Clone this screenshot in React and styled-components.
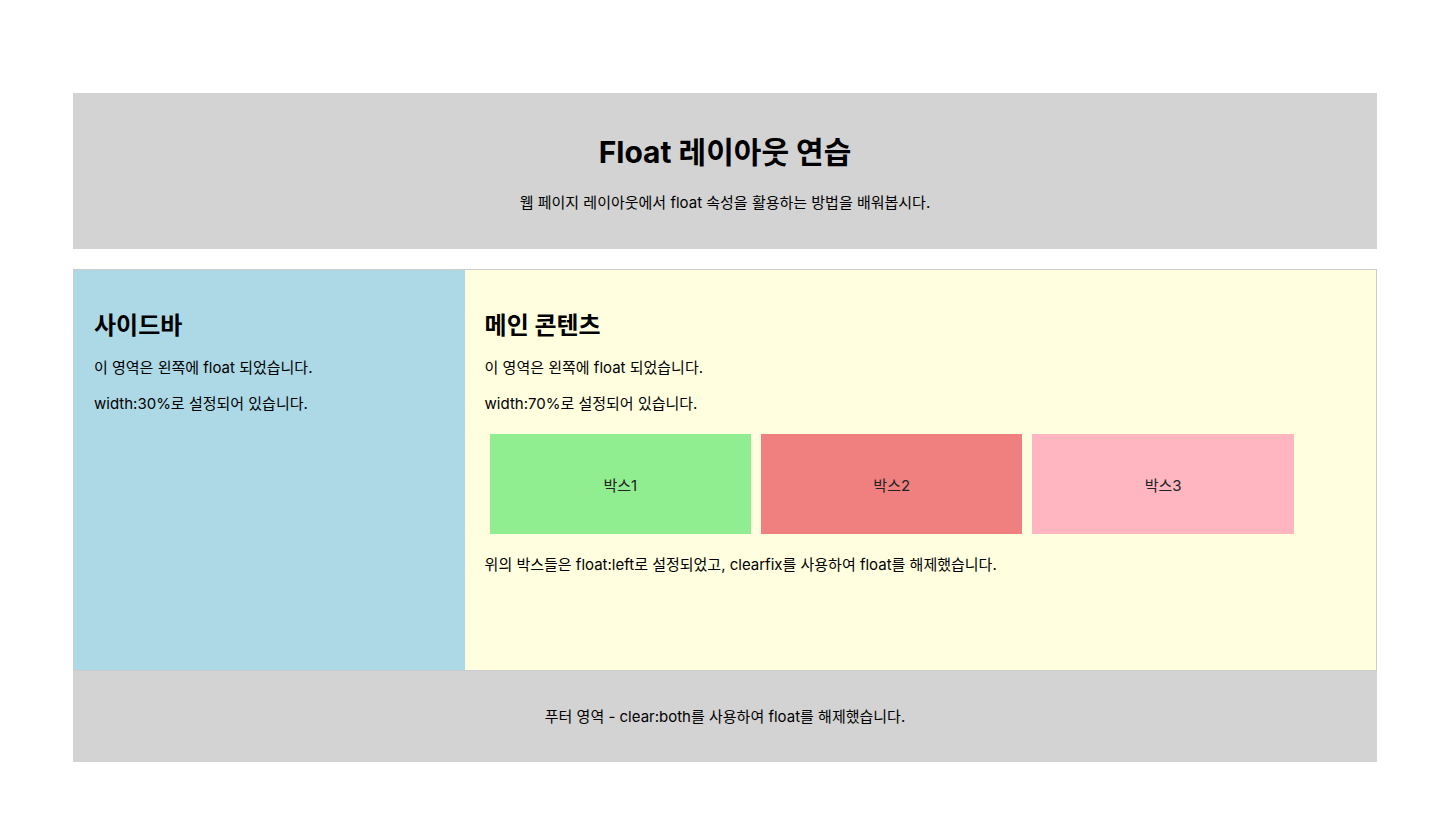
import React from 'react';
import styled, { createGlobalStyle } from 'styled-components';

const GlobalStyle = createGlobalStyle`
  body {
    margin: 0;
    background: #fff;
    font-family: "Inter", "Noto Sans CJK KR", sans-serif;
    color: #000;
  }
`;

const Page = styled.div`
  width: 1304px;
  margin: 93px 0 0 73px;
`;

const Header = styled.header`
  background: #d3d3d3;
  padding: 20px;
  text-align: center;
  margin-bottom: 20px;
  h1 {
    font-size: 30px;
    font-weight: 700;
    margin: 20px 0 21px;
    line-height: 38px;
  }
  p {
    font-size: 15px;
    line-height: 21px;
    margin: 0 0 16px;
  }
`;

const Row = styled.div`
  display: flex;
  min-height: 400px;
  border: 1px solid #ccc;
`;

const Column = styled.section`
  width: ${p => p.$width};
  background: ${p => p.$bg};
  padding: 20px;
  box-sizing: border-box;
  h2 {
    font-size: 24px;
    font-weight: 700;
    margin: 21px 0 17px;
    line-height: 29px;
  }
  p {
    font-size: 15px;
    line-height: 21px;
    margin: 0 0 15px;
  }
`;

const Boxes = styled.div`
  display: flex;
  margin: 0 0 15px;
`;

const Box = styled.div`
  width: 30%;
  height: 100px;
  margin: 5px;
  background: ${p => p.$bg};
  display: flex;
  align-items: center;
  justify-content: center;
  font-size: 15px;
  color: #222;
`;

const Footer = styled.footer`
  background: #d3d3d3;
  padding: 20px;
  text-align: center;
  p {
    font-size: 15px;
    line-height: 21px;
    margin: 15px 0;
  }
`;

export default function App() {
  return (
    <Page>
      <GlobalStyle />
      <Header>
        <h1>Float 레이아웃 연습</h1>
        <p>웹 페이지 레이아웃에서 float 속성을 활용하는 방법을 배워봅시다.</p>
      </Header>
      <Row>
        <Column $width="30%" $bg="#add8e6">
          <h2>사이드바</h2>
          <p>이 영역은 왼쪽에 float 되었습니다.</p>
          <p>width:30%로 설정되어 있습니다.</p>
        </Column>
        <Column $width="70%" $bg="#ffffe0">
          <h2>메인 콘텐츠</h2>
          <p>이 영역은 왼쪽에 float 되었습니다.</p>
          <p>width:70%로 설정되어 있습니다.</p>
          <Boxes>
            <Box $bg="#90ee90">박스1</Box>
            <Box $bg="#f08080">박스2</Box>
            <Box $bg="#ffb6c1">박스3</Box>
          </Boxes>
          <p>위의 박스들은 float:left로 설정되었고, clearfix를 사용하여 float를 해제했습니다.</p>
        </Column>
      </Row>
      <Footer>
        <p>푸터 영역 - clear:both를 사용하여 float를 해제했습니다.</p>
      </Footer>
    </Page>
  );
}
